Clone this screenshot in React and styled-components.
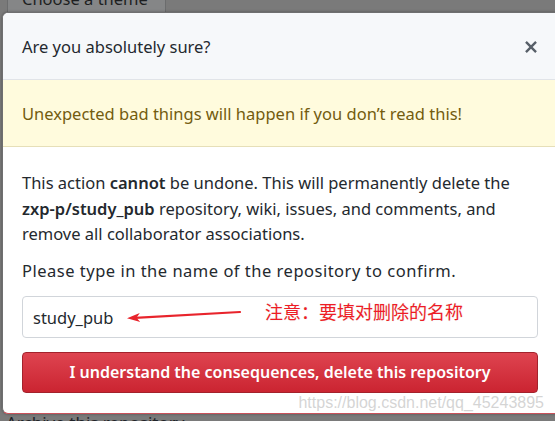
import React from "react";
import styled, { createGlobalStyle } from "styled-components";

const GlobalStyle = createGlobalStyle`
	html, body {
		margin: 0;
		padding: 0;
		background: #7a7a7a;
	}
	* {
		box-sizing: border-box;
	}
`;

function CloseIcon() {
	return (
		<svg width="14" height="18" viewBox="0 0 12 16" fill="#586069">
			<path d="M7.48 8l3.75 3.75-1.48 1.48L6 9.48l-3.75 3.75-1.48-1.48L4.52 8 .77 4.25l1.48-1.48L6 6.52l3.75-3.75 1.48 1.48L7.48 8z" />
		</svg>
	);
}

function Arrow() {
	return (
		<svg width="116" height="18" viewBox="0 0 116 18">
			<line x1="114" y1="4" x2="9" y2="9.8" stroke="#e8242c" strokeWidth="2.2" strokeLinecap="round" />
			<path d="M1 10.3 L13.75 5.08 L10.5 9.7 L14.25 14.06 Z" fill="#e8242c" />
		</svg>
	);
}

export default function App() {
	return (
		<>
			<GlobalStyle />
			<Page>
				<TopStrip>
					<ThemeButton>Choose a theme</ThemeButton>
				</TopStrip>
				<Dialog>
					<Header>
						<Title>Are you absolutely sure?</Title>
						<CloseBtn>
							<CloseIcon />
						</CloseBtn>
					</Header>
					<Flash>Unexpected bad things will happen if you don’t read this!</Flash>
					<Body>
						<Para>
							This action <b>cannot</b> be undone. This will permanently delete the{" "}
							<b>zxp-p/study_pub</b> repository, wiki, issues, and comments, and remove all
							collaborator associations.
						</Para>
						<Prompt>Please type in the name of the repository to confirm.</Prompt>
						<InputWrap>
							<Input defaultValue="study_pub" />
							<Note>
								<Arrow />
								<NoteText>注意：要填对删除的名称</NoteText>
							</Note>
						</InputWrap>
						<DangerButton>I understand the consequences, delete this repository</DangerButton>
						<Watermark>https://blog.csdn.net/qq_45243895</Watermark>
					</Body>
				</Dialog>
				<Archive>Archive this repository</Archive>
			</Page>
		</>
	);
}

const Page = styled.div`
	width: 555px;
	height: 421px;
	overflow: hidden;
	display: flex;
	flex-direction: column;
	background: #7a7a7a;
	font-family: "Noto Sans", "Open Sans", sans-serif;
	color: #24292e;
`;

const TopStrip = styled.div`
	height: 12px;
	flex-shrink: 0;
	display: flex;
	align-items: flex-end;
	padding-left: 7px;
`;

const ThemeButton = styled.div`
	height: 30px;
	width: 159px;
	flex-shrink: 0;
	padding-left: 14px;
	line-height: 34px;
	font-size: 16.5px;
	color: #1d1f21;
	background: #858687;
	border: 1px solid #6b6c6d;
	border-top: none;
	border-bottom: none;
	overflow: hidden;
	white-space: nowrap;
`;

const Dialog = styled.div`
	position: relative;
	z-index: 1;
	flex-shrink: 0;
	margin-left: 2px;
	width: 556px;
	background: #fff;
	border: 1px solid #6f6f70;
	border-right: none;
	border-bottom: 1px solid #c9515a;
	border-radius: 6px 0 0 6px;
	box-shadow: 0 0 3px rgba(0, 0, 0, 0.35);
	display: flex;
	flex-direction: column;
	overflow: hidden;
`;

const Header = styled.div`
	height: 67px;
	padding: 0 20px 0 19px;
	background: #f6f8fa;
	border-bottom: 1px solid #e1e4e8;
	display: flex;
	align-items: center;
	justify-content: space-between;
`;

const Title = styled.h3`
	margin: 0;
	font-size: 16.5px;
	font-weight: 400;
	color: #24292e;
`;

const CloseBtn = styled.div`
	display: flex;
	margin-top: 1px;
`;

const Flash = styled.div`
	height: 67px;
	padding: 0 19px;
	display: flex;
	align-items: center;
	background: #fffbdd;
	color: #735c0f;
	border-bottom: 1px solid #e6dfb8;
	font-size: 16.5px;
`;

const Body = styled.div`
	position: relative;
	padding: 23px 20px 20px 19px;
	display: flex;
	flex-direction: column;
	font-size: 16.5px;
	line-height: 25.6px;
`;

const Para = styled.p`
	margin: 0 0 11px;
	max-width: 500px;

	b {
		font-weight: 600;
	}
`;

const Prompt = styled.p`
	margin: 0 0 13px;
	letter-spacing: 0.5px;
`;

const InputWrap = styled.div`
	position: relative;
	margin-bottom: 14px;
`;

const Input = styled.input`
	display: block;
	width: 100%;
	height: 42px;
	padding: 0 10px;
	border: 1px solid #d1d5da;
	border-radius: 4px;
	font-family: inherit;
	font-size: 16.5px;
	color: #24292e;
	background: #fff;
	outline: none;
`;

const Note = styled.div`
	position: absolute;
	left: 104px;
	top: 12px;
	display: flex;
	align-items: flex-start;
`;

const NoteText = styled.span`
	margin-left: 23px;
	margin-top: -9px;
	font-family: "Noto Sans CJK SC", sans-serif;
	font-size: 18px;
	line-height: 24px;
	color: #ee1c25;
	white-space: nowrap;
	text-shadow: 0 0 2px #fff, 0 0 3px #fff, 0 0 1px #bbb;
`;

const DangerButton = styled.div`
	height: 41px;
	display: flex;
	align-items: center;
	justify-content: center;
	border: 1px solid #a3222c;
	border-radius: 4px;
	background: linear-gradient(#de4450, #cb2431);
	color: #fff;
	font-weight: 600;
	font-size: 16px;
`;

const Watermark = styled.span`
	position: absolute;
	right: 14px;
	bottom: -2px;
	font-family: "Liberation Sans", Arial, sans-serif;
	font-size: 16px;
	white-space: nowrap;
	color: rgba(205, 205, 205, 0.85);
`;

const Archive = styled.div`
	padding-left: 6px;
	font-size: 17px;
	line-height: 18px;
	color: #1f2328;
	white-space: nowrap;
`;
